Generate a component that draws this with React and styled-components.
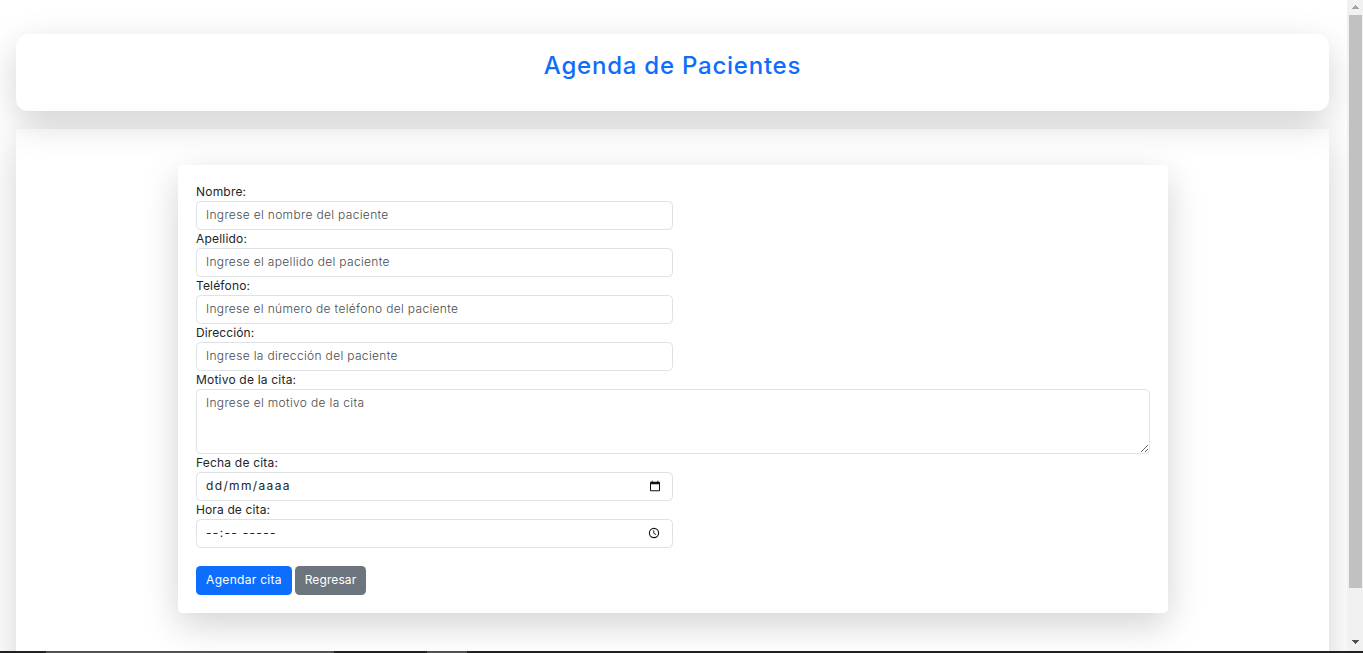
import React from "react";
import styled, { createGlobalStyle } from "styled-components";

const GlobalStyle = createGlobalStyle`
  *, *::before, *::after { box-sizing: border-box; }
  html, body { margin: 0; height: 100%; overflow: hidden; }
  body {
    background: #fff;
    color: #212529;
    font-family: Inter, "Open Sans", sans-serif;
    font-size: 12px;
    font-weight: 300;
    line-height: 18px;
  }
`;

const Screen = styled.div`
  display: flex;
  flex-direction: column;
  height: 653px;
  width: 1363px;
  overflow: hidden;
`;

const Viewport = styled.div`
  display: flex;
  flex: 1;
  min-height: 0;
`;

const Page = styled.main`
  flex: 1;
  padding: 34px 18px 0 16px;
  overflow: hidden;
`;

const shadow = "0 12px 36px rgba(0, 0, 0, 0.175)";

const Header = styled.header`
  height: 77px;
  padding-top: 17px;
  border-radius: 12px;
  box-shadow: ${shadow};
  text-align: center;
`;

const Title = styled.h1`
  margin: 0;
  color: #0d6efd;
  font-size: 24px;
  font-weight: 500;
  line-height: 29px;
  letter-spacing: ${(p) => p.$tracking}px;
`;

const Section = styled.section`
  height: 620px;
  margin-top: 18px;
  padding: 36px 161px 0 162px;
  box-shadow: ${shadow};
`;

const Card = styled.form`
  height: 448px;
  padding: 18px;
  background: #fff;
  border-radius: 4.5px;
  box-shadow: ${shadow};
`;

const Label = styled.label`
  display: block;
  height: 18px;
  font-weight: 400;
  span { letter-spacing: ${(p) => p.$tracking}px; }
`;

const control = `
  display: block;
  margin: 0;
  padding: 4px 9px;
  border: 1px solid #dee2e6;
  border-radius: 4.5px;
  background: #fff;
  color: #212529;
  font: inherit;
  outline: none;
  &::placeholder { color: #484b4e; opacity: 1; }
`;

const Input = styled.input`
  ${control}
  width: 477px;
  height: 29px;
  padding: 3px 9px 5px;
  letter-spacing: ${(p) => p.$tracking}px;
`;

const TextArea = styled.textarea`
  ${control}
  width: 954px;
  height: 65px;
  resize: vertical;
  letter-spacing: ${(p) => p.$tracking}px;
`;

const Picker = styled.div`
  ${control}
  display: flex;
  align-items: center;
  justify-content: space-between;
  width: 477px;
  height: 29px;
  padding: 3px ${(p) => p.$inset}px 5px 9px;
  font-weight: 400;
  span { letter-spacing: ${(p) => p.$tracking}px; white-space: pre; }
`;

const Actions = styled.div`
  display: flex;
  gap: 3px;
  margin-top: 18px;
`;

const Button = styled.button`
  width: ${(p) => p.$width}px;
  height: 29px;
  padding: 0 0 1px;
  border: 0;
  border-radius: 4.5px;
  background: ${(p) => p.$color};
  color: #fff;
  font: inherit;
  font-weight: 400;
  letter-spacing: ${(p) => p.$tracking}px;
  white-space: nowrap;
`;

const Scrollbar = styled.div`
  display: flex;
  flex-direction: column;
  align-items: center;
  width: 16px;
  padding: 5px 0 7px;
  background: #f1f1f1;
`;

const Thumb = styled.div`
  width: 13px;
  height: 573px;
  margin: 6px 0 auto 1px;
  background: #c1c1c1;
`;

const Taskbar = styled.div`
  display: flex;
  height: 2px;
  background: #202124;
`;

const Task = styled.div`
  width: ${(p) => p.$width}px;
  margin-left: ${(p) => p.$gap}px;
  background: ${(p) => p.$color};
`;

const Arrow = ({ down }) => (
  <svg width="8" height="4" viewBox="0 0 8 4" shapeRendering="crispEdges">
    <path d={down ? "M0 0h8L4 4z" : "M0 4h8L4 0z"} fill={down ? "#505050" : "#a3a3a3"} />
  </svg>
);

const CalendarIcon = () => (
  <svg width="12" height="12" viewBox="0 0 12 12">
    <path
      fill="#111"
      fillRule="evenodd"
      d="M2.7 .8h1v1h4.6v-1h1v1h.7a1 1 0 0 1 1 1v7.4a1 1 0 0 1-1 1H2a1 1 0 0 1-1-1V2.800a1 1 0 0 1 1-1h.7zM2 4.200v6h8v-6z"
    />
  </svg>
);

const ClockIcon = () => (
  <svg width="12" height="12" viewBox="0 0 12 12" fill="none" stroke="#111">
    <circle cx="6" cy="6" r="4.600" strokeWidth="1.100" />
    <path d="M5.800 3.200v3.100l2.300 1.400" strokeWidth=".9" />
  </svg>
);

const fields = [
  { label: "Nombre:", lt: 0.2, hint: "Ingrese el nombre del paciente", ht: 0.33 },
  { label: "Apellido:", lt: 0.2, hint: "Ingrese el apellido del paciente", ht: 0.33 },
  { label: "Teléfono:", lt: 0.15, hint: "Ingrese el número de teléfono del paciente", ht: 0.32 },
  { label: "Dirección:", lt: 0.1, hint: "Ingrese la dirección del paciente", ht: 0.33 },
];

export default function App() {
  return (
    <Screen>
      <GlobalStyle />
      <Viewport>
        <Page>
          <Header>
            <Title $tracking={0.77}>Agenda de Pacientes</Title>
          </Header>
          <Section>
            <Card>
              {fields.map((f) => (
                <React.Fragment key={f.label}>
                  <Label $tracking={f.lt}><span>{f.label}</span></Label>
                  <Input placeholder={f.hint} $tracking={f.ht} />
                </React.Fragment>
              ))}
              <Label $tracking={0.2}><span>Motivo de la cita:</span></Label>
              <TextArea placeholder="Ingrese el motivo de la cita" $tracking={0.33} />
              <Label $tracking={0.2}><span>Fecha de cita:</span></Label>
              <Picker $tracking={1.35} $inset={11}>
                <span>dd/mm/aaaa</span>
                <CalendarIcon />
              </Picker>
              <Label $tracking={0.13}><span>Hora de cita:</span></Label>
              <Picker $tracking={1.3} $inset={12}>
                <span>--:-- -----</span>
                <ClockIcon />
              </Picker>
              <Actions>
                <Button type="button" $width={96} $color="#0d6efd" $tracking={0.3}>Agendar cita</Button>
                <Button type="button" $width={71} $color="#6c757d" $tracking={0.1}>Regresar</Button>
              </Actions>
            </Card>
          </Section>
        </Page>
        <Scrollbar>
          <Arrow />
          <Thumb />
          <Arrow down />
        </Scrollbar>
      </Viewport>
      <Taskbar>
        <Task $gap={46} $width={288} $color="#505255" />
        <Task $gap={93} $width={40} $color="#505255" />
      </Taskbar>
    </Screen>
  );
}
